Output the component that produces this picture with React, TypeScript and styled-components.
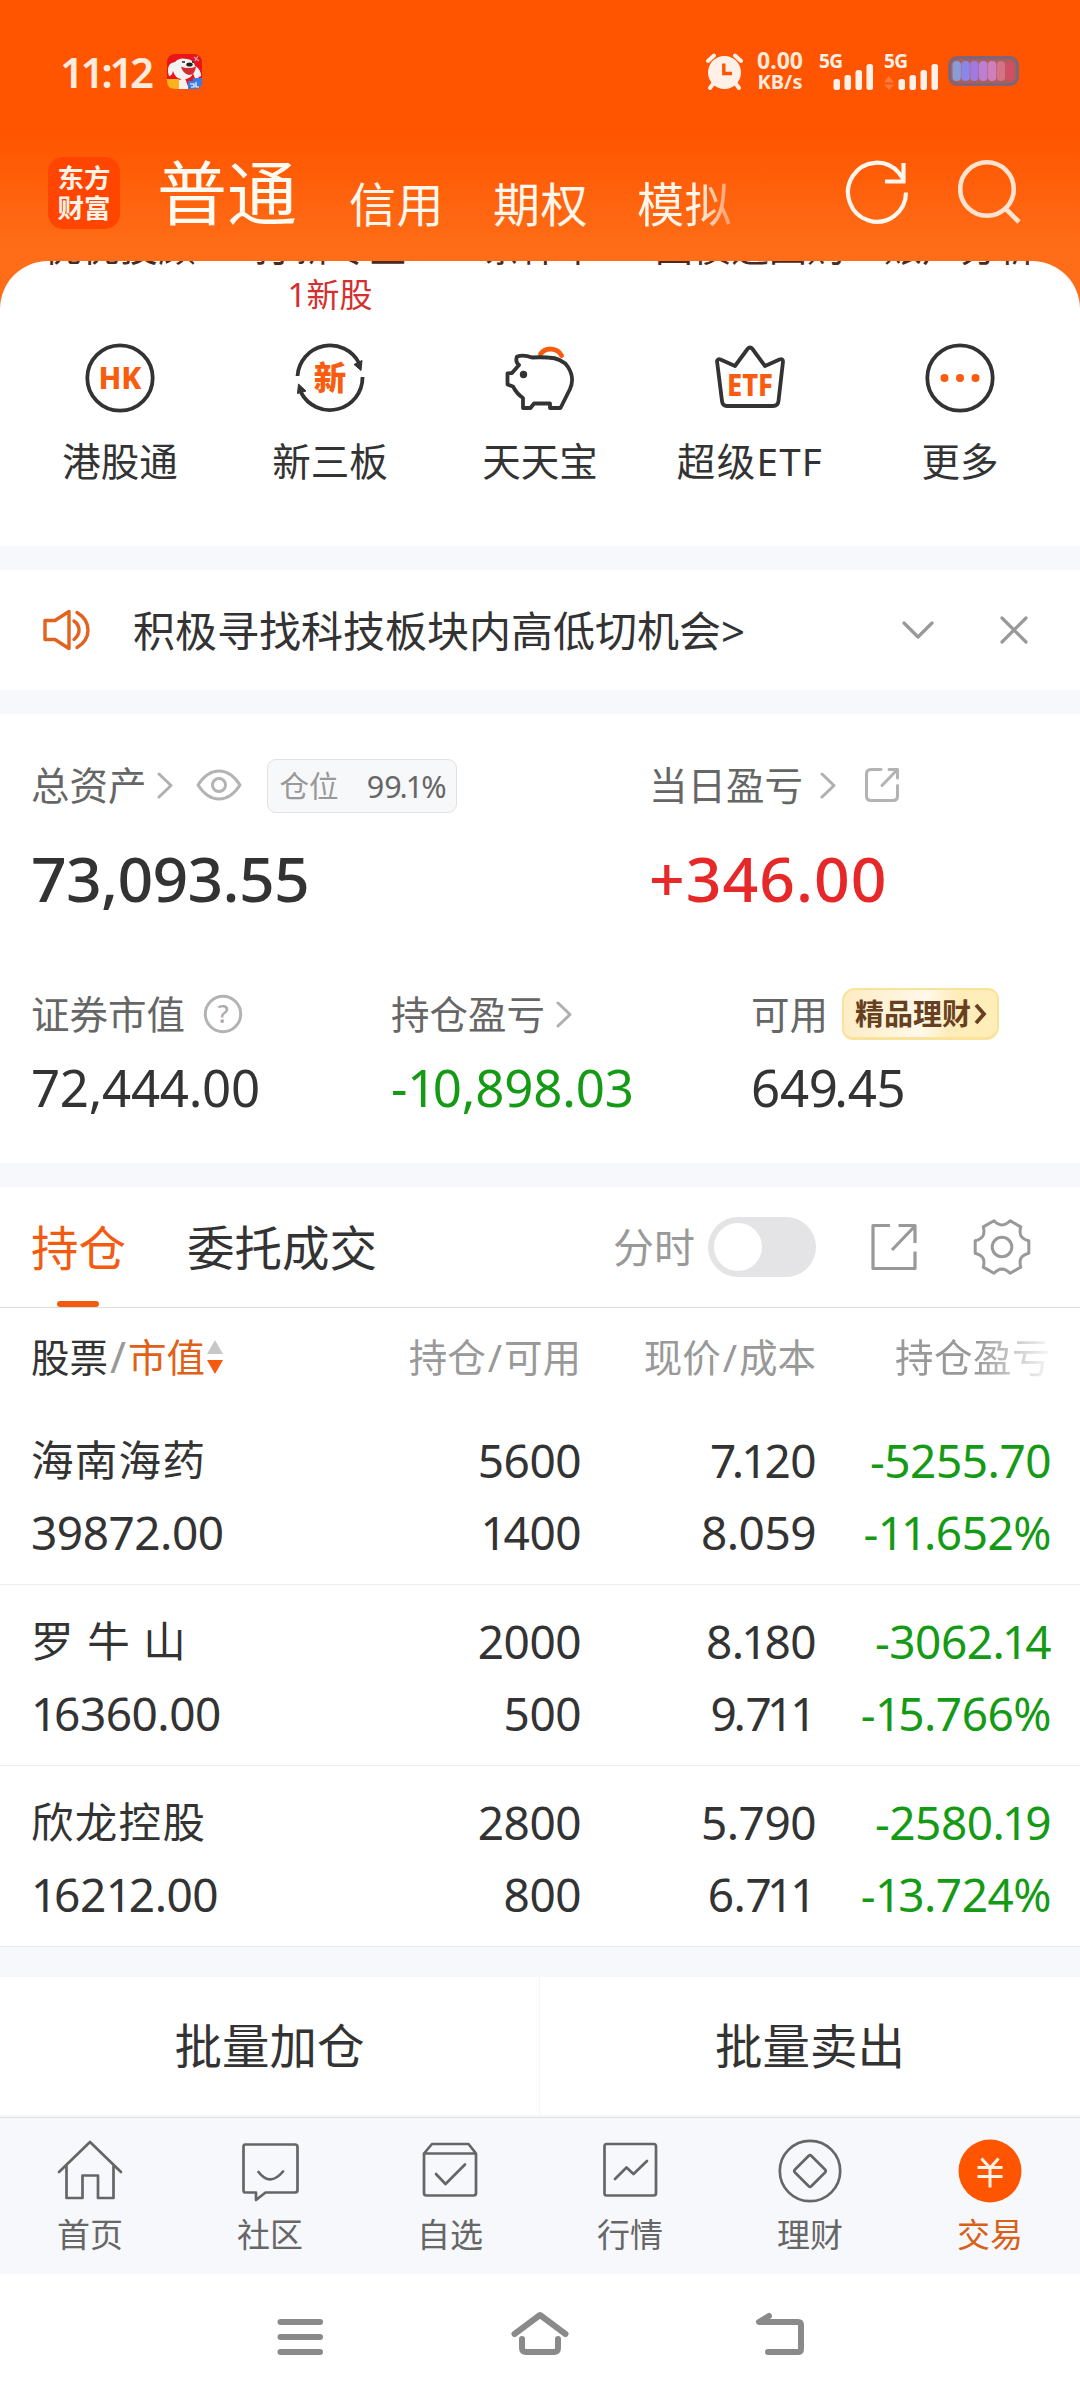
import React from "react";
import styled, { createGlobalStyle } from "styled-components";

const GlobalStyle = createGlobalStyle`
  * { box-sizing: border-box; }
  body {
    margin: 0;
    background: #fff;
    font-family: "Noto Sans", "Noto Sans CJK SC", sans-serif;
    color: #333;
  }
  svg { display: block; flex: none; }
`;

const Screen = styled.div`
  width: 1080px;
  height: 2400px;
  display: flex;
  flex-direction: column;
  overflow: hidden;
  background: #fff;
`;

const Text = styled.span<{ $size: number; $color?: string; $weight?: number; $gap?: number; $line?: number }>`
  font-size: ${(p) => p.$size}px;
  line-height: ${(p) => p.$line ?? Math.round(p.$size * 1.3)}px;
  color: ${(p) => p.$color ?? "#333"};
  font-weight: ${(p) => p.$weight ?? 400};
  letter-spacing: ${(p) => p.$gap ?? 0}px;
  white-space: nowrap;
`;

/* Tightens the pairs that sit loosely when digits share one advance width. */
const Kern = styled.span<{ $em: number }>`
  letter-spacing: ${(p) => p.$em}em;
`;

const pairKern = (a: string, b: string) => {
  if (a === "7" && b === ".") return -0.1;
  if (a === "9" && b === ".") return -0.07;
  if (a === "." && b === "1") return -0.06;
  if (a === "7" && b === "1") return -0.1;
  if (a === "1") return -0.07;
  return 0;
};

const Digits = ({ value }: { value: string }) => (
  <>
    {value.split("").map((c, i) => {
      const k = i < value.length - 1 ? pairKern(c, value[i + 1]) : 0;
      return k ? <Kern key={i} $em={k}>{c}</Kern> : c;
    })}
  </>
);

/* ---------- header ---------- */

const Header = styled.header`
  height: 261px;
  flex: none;
  background: linear-gradient(#ff5500 0, #ff5500 135px, #ff6d18 250px);
`;

const StatusBar = styled.div`
  height: 142px;
  padding: 0 61px 0 60px;
  display: flex;
  align-items: center;
  justify-content: space-between;
`;

const StatusSide = styled.div`
  display: flex;
  align-items: center;
`;

const Clock = styled(Text)`
  width: 107px;
`;

const Speed = styled.div`
  display: flex;
  flex-direction: column;
  align-items: center;
  width: 50px;
  margin: 0 14px 0 12px;
`;

const MainTabs = styled.nav`
  height: 119px;
  padding: 0 58px 0 48px;
  display: flex;
  align-items: flex-start;
`;

const Logo = styled.div`
  width: 72px;
  height: 72px;
  margin-top: 15px;
  border-radius: 15px;
  background: #ff4500;
  display: flex;
  flex-direction: column;
  align-items: center;
  justify-content: center;
`;

const ActiveMode = styled(Text)`
  margin: 6px 0 0 37px;
  width: 153px;
`;

const Mode = styled(Text)<{ $fade?: boolean }>`
  margin-top: 32px;
  width: 144px;
  ${(p) => p.$fade && "-webkit-mask-image: linear-gradient(90deg, #000 60px, rgba(0,0,0,.35) 96px);"}
`;

const HeaderActions = styled.div`
  margin: 17px 0 0 auto;
  display: flex;
  gap: 49px;
`;

/* ---------- shortcuts ---------- */

const ShortcutBackdrop = styled.section`
  height: 285px;
  flex: none;
  background: linear-gradient(#ff6d18 0, #ff6d18 60px, #fff 60px);
`;

const ShortcutCard = styled.div`
  height: 285px;
  border-radius: 48px 48px 0 0;
  background: #fff;
  overflow: hidden;
`;

const ShortcutGrid = styled.div`
  display: grid;
  grid-template-columns: repeat(5, 210px);
  padding: 0 15px;
  justify-items: center;
`;

const ScrolledRow = styled(ShortcutGrid)`
  height: 5px;
  grid-template-rows: 5px;
  overflow: hidden;
  align-items: end;
`;

const BadgeRow = styled(ShortcutGrid)`
  height: 76px;
  align-items: start;
  padding-top: 7px;
`;

const Shortcut = styled.div`
  display: flex;
  flex-direction: column;
  align-items: center;
  gap: 22px;
`;

/* ---------- shared blocks ---------- */

const Divider = styled.div<{ $h: number }>`
  height: ${(p) => p.$h}px;
  flex: none;
  background: #f7f8fb;
`;

const Notice = styled.section`
  height: 120px;
  flex: none;
  display: flex;
  align-items: center;
  padding: 0 51px 0 41px;
`;

const NoticeText = styled(Text)`
  margin-left: 42px;
  flex: 1;
`;

const NoticeActions = styled.div`
  display: flex;
  gap: 65px;
`;

/* ---------- assets ---------- */

const Assets = styled.section`
  height: 449px;
  flex: none;
  padding: 42px 31px 0;
  display: flex;
  flex-direction: column;
  gap: 43px;
`;

const AssetGrid = styled.div<{ $cols: string }>`
  display: grid;
  grid-template-columns: ${(p) => p.$cols};
`;

const Metric = styled.div`
  display: flex;
  flex-direction: column;
`;

const MetricLabel = styled.div`
  height: 58px;
  display: flex;
  align-items: center;
`;

const Spacer = styled.i<{ $w: number }>`
  width: ${(p) => p.$w}px;
  flex: none;
`;

const PositionChip = styled.div`
  width: 190px;
  height: 54px;
  margin-top: 2px;
  border: 1px solid #e2e2e5;
  border-radius: 9px;
  background: #f7f8fa;
  display: flex;
  align-items: center;
  justify-content: space-between;
  padding: 0 9px 0 12px;
`;

const WealthBadge = styled.div`
  width: 157px;
  height: 52px;
  margin-left: 14px;
  border: 2px solid #f9e29a;
  border-bottom-width: 3px;
  border-radius: 13px 11px 13px 11px;
  background: linear-gradient(100deg, #fdecc4 0%, #fff3d8 30%, #fff9ea 52%, #ffecba 70%, #ffeeb8 100%);
  display: flex;
  align-items: center;
  padding-left: 11px;
  gap: 3px;
`;

/* ---------- positions ---------- */

const PositionTabs = styled.div`
  height: 121px;
  flex: none;
  display: flex;
  border-bottom: 1px solid #dcdcdc;
  padding: 0 49px 0 31px;
`;

const Tab = styled.div`
  display: flex;
  flex-direction: column;
  align-items: center;
  justify-content: space-between;
  padding-top: 30px;
`;

const TabMark = styled.i`
  width: 42px;
  height: 6px;
  margin-right: 2px;
  border-radius: 3px;
  background: #f45b10;
`;

const TabTools = styled.div`
  margin-left: auto;
  height: 120px;
  display: flex;
  align-items: center;
`;

const Toggle = styled.div`
  width: 108px;
  height: 60px;
  margin: 0 54px 0 13px;
  border-radius: 30px;
  background: #e4e4e6;
  display: flex;
  align-items: center;
  padding-left: 6px;
`;

const Knob = styled.i`
  width: 48px;
  height: 48px;
  border-radius: 50%;
  background: #fff;
`;

const PositionHead = styled.div`
  height: 98px;
  flex: none;
  display: grid;
  grid-template-columns: 300px 250px 235px 235px;
  padding-left: 31px;
  align-items: center;
`;

const PositionRow = styled.div`
  height: 181px;
  flex: none;
  display: grid;
  grid-template-columns: 300px 250px 235px 235px;
  padding: 20px 0 0 31px;
  align-items: start;
  border-bottom: 1px solid #ececec;
`;

const Rows = styled.div`
  height: 541px;
  flex: none;
  display: flex;
  flex-direction: column;
  justify-content: flex-end;
`;

const Cell = styled.div<{ $right?: boolean }>`
  display: flex;
  flex-direction: column;
  align-items: ${(p) => (p.$right ? "flex-end" : "flex-start")};
`;

const HeadCell = styled.div<{ $right?: boolean; $fade?: boolean }>`
  display: flex;
  align-items: center;
  justify-content: ${(p) => (p.$right ? "flex-end" : "flex-start")};
  ${(p) => p.$fade && "-webkit-mask-image: linear-gradient(90deg, #000 160px, rgba(0,0,0,.08) 234px);"}
`;

const Slash = styled.span`
  margin: 0 2px;
`;

const BatchBar = styled.div`
  height: 138px;
  flex: none;
  display: grid;
  grid-template-columns: 1fr 1fr;
`;

const BatchButton = styled.div<{ $first?: boolean }>`
  display: flex;
  align-items: center;
  justify-content: center;
  border-right: ${(p) => (p.$first ? "1px solid #f4f5f8" : "0")};
`;

/* ---------- bottom bars ---------- */

const BottomNav = styled.nav`
  height: 157px;
  flex: none;
  border-top: 1px solid #e0e1e4;
  background: #f7f8fb;
  display: grid;
  grid-template-columns: repeat(6, 180px);
`;

const NavItem = styled.div`
  display: flex;
  flex-direction: column;
  align-items: center;
  padding-top: 18px;
  gap: 5px;
`;

const SystemNav = styled.div`
  flex: 1;
  display: flex;
  justify-content: center;
  gap: 180px;
  padding-top: 30px;
`;

/* ---------- icons ---------- */

const AppIcon = () => (
  <svg width="35" height="35" viewBox="0 0 35 35">
    <rect width="35" height="35" rx="8" fill="#e8151b" />
    <path d="M1 18 Q0 9 8 8 Q12 3 20 5 Q27 6 28 12 Q34 15 34 22 L29 25 Q27 23 26 19 Q24 26 14 25 Q8 24 6 17 Q5 22 2 22Z" fill="#f4f3f4" />
    <path d="M15 8 h3 M25 8 h2" stroke="#222" strokeWidth="1.500" />
    <ellipse cx="22.500" cy="10.500" rx="3.200" ry="2" fill="#222" />
    <path d="M14 12.500 Q21 15.500 29 12.500 Q28 21 22 21 Q16 20 14 12.500Z" fill="#d52d2f" />
    <path d="M0 25 H12 V35 H8 Q0 35 0 27Z" fill="#fbb21c" />
    <path d="M12 26 L18 24 L22 35 H12Z" fill="#f6f1ee" />
    <path d="M21 27 H26 V24 H35 V28 Q35 35 28 35 H21Z" fill="#3b7be0" />
    <path d="M23 30 h4 v3 h-3 M29 28 v5 h3" stroke="#fff" strokeWidth="1.200" fill="none" />
    <path d="M27 3 l5 4 M31 2 l-3 5" stroke="#c7a0c8" strokeWidth="1.200" />
  </svg>
);

const AlarmIcon = () => (
  <svg width="37" height="37" viewBox="0 0 37 37" fill="none" stroke="#fff1e8">
    <circle cx="18.500" cy="19.500" r="16.500" fill="#fff1e8" stroke="none" />
    <path d="M2 8 L8 2.500 M35 8 L29 2.500" strokeWidth="4" strokeLinecap="round" />
    <path d="M7 31 L4 35 M30 31 L33 35" strokeWidth="4" strokeLinecap="round" />
    <path d="M17.800 10.500 V20.500 H26" stroke="#ff5500" strokeWidth="3.400" />
  </svg>
);

const SignalIcon = ({ arrows }: { arrows?: boolean }) => (
  <svg width="56" height="37" viewBox="0 0 56 37" fill="#fff1e8">
    <text x="0" y="15" fontSize="19" fontWeight="700" fontFamily="Noto Sans" textLength="24">5G</text>
    <rect x="14.500" y="26" width="6.500" height="11" rx="2.500" />
    <rect x="25.500" y="22" width="6.500" height="15" rx="2.500" />
    <rect x="36.500" y="17" width="6.500" height="20" rx="2.500" />
    <rect x="47.500" y="11" width="6.500" height="26" rx="2.500" />
    {arrows && <path d="M0 29.500 L5 23 L10 29.500Z M0 31.500 L5 37 L10 31.500Z" fill="#ff7a3c" />}
  </svg>
);

const cells = ["#8b9bd6", "#8a86ea", "#a279dd", "#bd7fd4", "#d07fbd", "#d47287", "#cf4f64"];

const BatteryIcon = () => (
  <svg width="71" height="30" viewBox="0 0 71 30">
    <rect x="1.500" y="1.500" width="68" height="27" rx="7.500" fill="#a8605a" stroke="#80657a" strokeWidth="3" />
    {cells.map((c, i) => (
      <rect key={c} x={4.500 + i * 8.850} y="5" width="8.400" height="20" rx="4" fill={c} />
    ))}
  </svg>
);

const RefreshIcon = () => (
  <svg width="64" height="66" viewBox="0 0 64 66" fill="none" stroke="#fff7ee" strokeWidth="4.200">
    <path d="M61 33.500 A29 29.500 0 1 1 54 14 L59 21" />
    <path d="M58.500 4 V22.500 H40" />
  </svg>
);

const SearchIcon = () => (
  <svg width="64" height="66" viewBox="0 0 64 66" fill="none" stroke="#ffe3cf" strokeWidth="4.600">
    <circle cx="29" cy="30" r="26.800" />
    <path d="M47 49 L61 63" />
  </svg>
);

const Ring = ({ children }: { children: React.ReactNode }) => (
  <svg width="72" height="72" viewBox="0 0 72 72">
    <circle cx="36" cy="36" r="32.700" fill="none" stroke="#333" strokeWidth="3.800" />
    {children}
  </svg>
);

const HkIcon = () => (
  <Ring>
    <text x="36" y="47" fontSize="31" fontWeight="800" fill="#f95c0e" textAnchor="middle" fontFamily="Noto Sans" textLength="43" lengthAdjust="spacingAndGlyphs">HK</text>
  </Ring>
);

const NewBoardIcon = () => (
  <svg width="72" height="72" viewBox="0 0 72 72">
    <path d="M3.500 34 A32.600 32.600 0 0 1 65 21 M68.500 35 A32.600 32.600 0 0 1 7 50.500" fill="none" stroke="#333" strokeWidth="3.800" />
    <path d="M60 22.500 L68 18.500 L67 28.500Z M4.500 42 L12 49 L3.500 51.500Z" fill="#333" stroke="#333" strokeWidth="1" strokeLinejoin="round" />
    <text x="36" y="48" fontSize="32.500" fontWeight="900" fill="#f95c0e" textAnchor="middle" fontFamily="Noto Sans CJK SC">新</text>
  </svg>
);

const PiggyIcon = () => (
  <svg width="72" height="72" viewBox="0 0 72 72" fill="none" strokeLinejoin="round" strokeLinecap="round">
    <path d="M36.500 12 A12 11 0 0 1 57.500 13.500" stroke="#f95c0e" strokeWidth="4.800" />
    <path d="M13 14.500 Q20 12.500 28 15.500 Q36 15 44 15.500 Q58 16 64 25 Q71 36 66 47 Q63 53 56.500 66 H46 V61.500 H30 L26.500 66 H19 V56 Q13 52 9 44.500 L3.500 42.500 V31.500 L8 31 L15 23 Q11 20 13 14.500Z" stroke="#333" strokeWidth="3.800" />
    <circle cx="19.500" cy="32.500" r="3.700" fill="#333" />
  </svg>
);

const EtfIcon = () => (
  <svg width="72" height="72" viewBox="0 0 72 72" fill="none">
    <path d="M3 19 Q3.500 16.500 6.500 17.500 L21 24 L33.500 7 Q36 4 38.500 7 L51 24 L65.500 17.500 Q69 16.500 69 19.500 L64.500 59 Q64 64 59 64 H13 Q8.500 64 8 59Z" stroke="#333" strokeWidth="3.800" strokeLinejoin="round" />
    <text x="36" y="54" fontSize="31" fontWeight="800" fill="#f95c0e" textAnchor="middle" fontFamily="Noto Sans" textLength="46" lengthAdjust="spacingAndGlyphs">ETF</text>
  </svg>
);

const MoreIcon = () => (
  <Ring>
    {[20.500, 36, 51.500].map((x) => (
      <circle key={x} cx={x} cy="36" r="4" fill="#f95c0e" />
    ))}
  </Ring>
);

const SpeakerIcon = () => (
  <svg width="50" height="44" viewBox="0 0 50 44" fill="none" stroke="#e2621f" strokeWidth="3.400" strokeLinecap="round" strokeLinejoin="round">
    <path d="M4 12.500 H14 L28 3.500 V40.500 L14 31.500 H4Z" />
    <path d="M33 13 Q38 16.500 38 22 Q38 27.500 33 31.500" />
    <path d="M36 4.500 Q47 11 47 22 Q47 33 36 39.500" />
  </svg>
);

const ChevronRight = () => (
  <svg width="16" height="28" viewBox="0 0 16 28" fill="none" stroke="#b0b0b0" strokeWidth="3" strokeLinecap="round" strokeLinejoin="round">
    <path d="M2 3 L14 14.500 L2 26" />
  </svg>
);

const EyeIcon = () => (
  <svg width="46" height="34" viewBox="0 0 46 34" fill="none" stroke="#b3b3b3" strokeWidth="3">
    <path d="M2 17 Q11 3 23 3 Q35 3 44 17 Q35 31 23 31 Q11 31 2 17Z" strokeLinejoin="round" />
    <circle cx="23" cy="17" r="6.500" />
  </svg>
);

const ShareRound = () => (
  <svg width="36" height="36" viewBox="0 0 36 36" fill="none" stroke="#b3b3b3" strokeWidth="3" strokeLinecap="round" strokeLinejoin="round">
    <path d="M17 2.500 H7 Q2.500 2.500 2.500 7 V29 Q2.500 33.500 7 33.500 H29 Q33.500 33.500 33.500 29 V18.500" />
    <path d="M25 2.500 H33.500 V11 M33 3 L18 18.500" />
  </svg>
);

const ShareSquare = () => (
  <svg width="48" height="48" viewBox="0 0 48 48" fill="none" stroke="#999" strokeWidth="3.200" strokeLinejoin="round">
    <path d="M20 2.500 H3 V45.500 H45 V28.500" />
    <path d="M28.500 2.500 H45 V20 M44 4 L22 27" />
  </svg>
);

const QuestionIcon = () => (
  <svg width="40" height="40" viewBox="0 0 40 40">
    <circle cx="20" cy="20" r="17.700" fill="none" stroke="#b3b3b3" strokeWidth="3" />
    <text x="20" y="28.500" fontSize="25" fill="#aaa" textAnchor="middle" fontFamily="Noto Sans" fontWeight="500">?</text>
  </svg>
);

const gearPath = (() => {
  const at = (deg: number, r: number) => {
    const a = (deg * Math.PI) / 180;
    return `${(29 + r * Math.cos(a)).toFixed(2)} ${(29 + r * Math.sin(a)).toFixed(2)}`;
  };
  let d = `M${at(-13, 27.500)}`;
  for (let k = 0; k < 6; k++) {
    const t = k * 60;
    d += ` L${at(t + 13, 27.500)} Q${at(t + 20, 22.500)} ${at(t + 30, 22)} Q${at(t + 40, 22.500)} ${at(t + 47, 27.500)}`;
  }
  return d + "Z";
})();

const GearIcon = () => (
  <svg width="58" height="58" viewBox="0 0 58 58" fill="none" stroke="#999" strokeWidth="3" strokeLinejoin="round">
    <path d={gearPath} />
    <circle cx="29" cy="29" r="9.800" />
  </svg>
);

const SortIcon = () => (
  <svg width="16" height="34" viewBox="0 0 16 34">
    <path d="M8 0 L16 14 H0Z" fill="#c8c8c8" />
    <path d="M0 20 H16 L8 34Z" fill="#f45b10" />
  </svg>
);

const NavSvg = ({ children }: { children: React.ReactNode }) => (
  <svg width="72" height="72" viewBox="0 0 72 72" fill="none" stroke="#666" strokeWidth="2.700" strokeLinecap="round" strokeLinejoin="round">
    {children}
  </svg>
);

const navItems = [
  {
    label: "首页",
    icon: <path d="M5 36 L36 6 L67 36 M12.500 30 V62 H28.500 V39.500 H44 V62 H59.500 V30" />,
  },
  {
    label: "社区",
    icon: <path d="M11 8.500 H61 Q63.500 8.500 63.500 11 V54 Q63.500 56.500 61 56.500 H31.500 L22 64 V56.500 H11 Q9.500 56.500 9.500 54 V11 Q9.500 8.500 11 8.500Z M24.500 36 Q36 51 49 35.500" />,
  },
  {
    label: "自选",
    icon: <path d="M10 17.500 H62 V57 Q62 59.500 59.500 59.500 H12.500 Q10 59.500 10 57 V17.500 L18 8 H54.500 L62 17.500 M22 38 L31.500 48 L51 28.500" />,
  },
  {
    label: "行情",
    icon: <path d="M12.500 8 H59.500 Q62 8 62 10.500 V57 Q62 59.500 59.500 59.500 H12.500 Q10.500 59.500 10.500 57 V10.500 Q10.500 8 12.500 8Z M21 43 L32.500 31.500 L39.500 38 L53 25" />,
  },
  {
    label: "理财",
    icon: (
      <>
        <circle cx="36" cy="35" r="30.200" />
        <path d="M34.500 20 Q36 18.500 37.500 20 L51 33.500 Q52.500 35 51 36.500 L37.500 50 Q36 51.500 34.500 50 L21 36.500 Q19.500 35 21 33.500Z" />
      </>
    ),
  },
  {
    label: "交易",
    active: true,
    icon: (
      <>
        <circle cx="36" cy="35" r="31.500" fill="#ff5500" stroke="none" />
        <path d="M27.500 22.500 L36 32 L44.500 22.500 M23.500 31.500 H48.500 M23.500 40.500 H48.500 M36 32 V51.500" stroke="#fff3ea" strokeWidth="3" strokeLinecap="butt" />
      </>
    ),
  },
];

/* ---------- data ---------- */

const scrolledLabels = ["优优投顾", "打新专区", "条件单", "国债逆回购", "账户分析"];

const shortcuts = [
  { label: "港股通", icon: <HkIcon /> },
  { label: "新三板", icon: <NewBoardIcon /> },
  { label: "天天宝", icon: <PiggyIcon /> },
  { label: "超级ETF", icon: <EtfIcon />, gap: 1.3 },
  { label: "更多", icon: <MoreIcon /> },
];

const positions = [
  { name: "海南海药", value: "39872.00", held: "5600", usable: "1400", price: "7.120", cost: "8.059", pnl: "-5255.70", rate: "-11.652%" },
  { name: "罗 牛 山", value: "16360.00", held: "2000", usable: "500", price: "8.180", cost: "9.711", pnl: "-3062.14", rate: "-15.766%" },
  { name: "欣龙控股", value: "16212.00", held: "2800", usable: "800", price: "5.790", cost: "6.711", pnl: "-2580.19", rate: "-13.724%" },
];

const GREEN = "#159a15";

const Pair = ({ top, bottom, color, right, cjk }: { top: string; bottom: string; color?: string; right?: boolean; cjk?: boolean }) => (
  <Cell $right={right}>
    {cjk ? (
      <Text $size={42.500} $gap={1.300} $line={72}>{top}</Text>
    ) : (
      <Text $size={46} $gap={-0.500} $line={72} $color={color}><Digits value={top} /></Text>
    )}
    <Text $size={46} $gap={-0.500} $line={72} $color={color}><Digits value={bottom} /></Text>
  </Cell>
);

export default function App() {
  return (
    <Screen>
      <GlobalStyle />
      <Header>
        <StatusBar>
          <StatusSide>
            <Clock $size={42} $color="#ffeade" $weight={600} $gap={-3.400}>11:12</Clock>
            <AppIcon />
          </StatusSide>
          <StatusSide>
            <AlarmIcon />
            <Speed>
              <Text $size={23} $line={22} $weight={700} $color="#ffeade">0.00</Text>
              <Text $size={20} $line={22} $weight={700} $color="#ffeade">KB/s</Text>
            </Speed>
            <SignalIcon />
            <Spacer $w={9} />
            <SignalIcon arrows />
            <Spacer $w={8} />
            <BatteryIcon />
          </StatusSide>
        </StatusBar>
        <MainTabs>
          <Logo>
            <Text $size={26.500} $line={30} $weight={700} $color="#fff3e8">东方</Text>
            <Text $size={26.500} $line={30} $weight={700} $color="#fff3e8">财富</Text>
          </Logo>
          <ActiveMode $size={70} $color="#fffaf2">普通</ActiveMode>
          <Spacer $w={39} />
          <Mode $size={47} $color="#fff6ec" $gap={0.500}>信用</Mode>
          <Mode $size={47} $color="#fff6ec" $gap={0.500}>期权</Mode>
          <Mode $size={47} $color="#fff6ec" $gap={0.500} $fade>模拟</Mode>
          <HeaderActions>
            <RefreshIcon />
            <SearchIcon />
          </HeaderActions>
        </MainTabs>
      </Header>

      <ShortcutBackdrop>
        <ShortcutCard>
          <ScrolledRow>
            {scrolledLabels.map((l) => (
              <Text key={l} $size={38} $line={40} $color="#4a2a20">{l}</Text>
            ))}
          </ScrolledRow>
          <BadgeRow>
            <span />
            <Text $size={33} $color="#d3302f">1新股</Text>
          </BadgeRow>
          <ShortcutGrid>
            {shortcuts.map((s) => (
              <Shortcut key={s.label}>
                {s.icon}
                <Text $size={38.500} $gap={s.gap}>{s.label}</Text>
              </Shortcut>
            ))}
          </ShortcutGrid>
        </ShortcutCard>
      </ShortcutBackdrop>

      <Divider $h={24} />
      <Notice>
        <SpeakerIcon />
        <NoticeText $size={42}>积极寻找科技板块内高低切机会&gt;</NoticeText>
        <NoticeActions>
          <svg width="32" height="30" viewBox="0 0 32 30" fill="none" stroke="#999" strokeWidth="3.200" strokeLinecap="round" strokeLinejoin="round">
            <path d="M2 8 L16 22 L30 8" />
          </svg>
          <svg width="30" height="30" viewBox="0 0 30 30" fill="none" stroke="#999" strokeWidth="3.200" strokeLinecap="round">
            <path d="M3 3 L27 27 M27 3 L3 27" />
          </svg>
        </NoticeActions>
      </Notice>
      <Divider $h={24} />

      <Assets>
        <AssetGrid $cols="618px 1fr">
          <Metric>
            <MetricLabel>
              <Text $size={38.500} $color="#666">总资产</Text>
              <Spacer $w={10} />
              <ChevronRight />
              <Spacer $w={23} />
              <EyeIcon />
              <Spacer $w={25} />
              <PositionChip>
                <Text $size={29.500} $color="#999">仓位</Text>
                <Text $size={30.500} $color="#666"><Digits value="99.1%" /></Text>
              </PositionChip>
            </MetricLabel>
            <Text $size={62.500} $line={128} $weight={500} $gap={-0.700}>73,093.55</Text>
          </Metric>
          <Metric>
            <MetricLabel>
              <Text $size={38.500} $color="#666">当日盈亏</Text>
              <Spacer $w={17} />
              <ChevronRight />
              <Spacer $w={28} />
              <ShareRound />
            </MetricLabel>
            <Text $size={62.500} $line={128} $weight={500} $gap={1} $color="#e62828">+346.00</Text>
          </Metric>
        </AssetGrid>
        <AssetGrid $cols="360px 360px 1fr">
          <Metric>
            <MetricLabel>
              <Text $size={38.500} $color="#666">证券市值</Text>
              <Spacer $w={18} />
              <QuestionIcon />
            </MetricLabel>
            <Text $size={51} $line={88} $gap={-0.300}>72,444.00</Text>
          </Metric>
          <Metric>
            <MetricLabel>
              <Text $size={38.500} $color="#666">持仓盈亏</Text>
              <Spacer $w={11} />
              <ChevronRight />
            </MetricLabel>
            <Text $size={51} $line={88} $gap={-0.200} $color={GREEN}><Digits value="-10,898.03" /></Text>
          </Metric>
          <Metric>
            <MetricLabel>
              <Text $size={38.500} $color="#666">可用</Text>
              <WealthBadge>
                <Text $size={29} $weight={700} $color="#66401f">精品理财</Text>
                <svg width="14" height="22" viewBox="0 0 14 22" fill="none" stroke="#66401f" strokeWidth="3.800">
                  <path d="M2 2 L10 11 L2 20" />
                </svg>
              </WealthBadge>
            </MetricLabel>
            <Text $size={51} $line={88} $gap={-0.300}><Digits value="649.45" /></Text>
          </Metric>
        </AssetGrid>
      </Assets>
      <Divider $h={24} />

      <PositionTabs>
        <Tab>
          <Text $size={47.500} $color="#f45b10">持仓</Text>
          <TabMark />
        </Tab>
        <Spacer $w={61} />
        <Tab>
          <Text $size={47.500}>委托成交</Text>
        </Tab>
        <TabTools>
          <Text $size={41} $color="#999">分时</Text>
          <Toggle>
            <Knob />
          </Toggle>
          <ShareSquare />
          <Spacer $w={55} />
          <GearIcon />
        </TabTools>
      </PositionTabs>

      <PositionHead>
        <HeadCell>
          <Text $size={38.500}>股票</Text>
          <Text $size={43} $color="#999"><Slash>/</Slash></Text>
          <Text $size={38.500} $color="#e06018">市值</Text>
          <Spacer $w={2} />
          <SortIcon />
        </HeadCell>
        <HeadCell $right><Text $size={38.500} $color="#999">持仓<Slash>/</Slash>可用</Text></HeadCell>
        <HeadCell $right><Text $size={38.500} $color="#999">现价<Slash>/</Slash>成本</Text></HeadCell>
        <HeadCell $right $fade><Text $size={38.500} $gap={0.500} $color="#999">持仓盈亏</Text></HeadCell>
      </PositionHead>
      <Rows>
        {positions.map((p) => (
          <PositionRow key={p.name}>
            <Pair top={p.name} bottom={p.value} cjk />
            <Pair right top={p.held} bottom={p.usable} />
            <Pair right top={p.price} bottom={p.cost} />
            <Pair right top={p.pnl} bottom={p.rate} color={GREEN} />
          </PositionRow>
        ))}
      </Rows>
      <Divider $h={30} />
      <BatchBar>
        <BatchButton $first><Text $size={47.500}>批量加仓</Text></BatchButton>
        <BatchButton><Text $size={47.500}>批量卖出</Text></BatchButton>
      </BatchBar>
      <Divider $h={2} />

      <BottomNav>
        {navItems.map((n) => (
          <NavItem key={n.label}>
            <NavSvg>{n.icon}</NavSvg>
            <Text $size={33} $color={n.active ? "#d8601a" : "#666"}>{n.label}</Text>
          </NavItem>
        ))}
      </BottomNav>
      <SystemNav>
        <svg width="60" height="60" viewBox="0 0 60 60" stroke="#8a8a8a" strokeWidth="6" strokeLinecap="round">
          <path d="M10.500 18 H50 M10.500 33 H50 M10.500 48 H50" />
        </svg>
        <svg width="60" height="60" viewBox="0 0 60 60" fill="none" stroke="#8a8a8a" strokeWidth="6" strokeLinecap="round" strokeLinejoin="round">
          <path d="M4.500 30 L30 11 L55.500 30 M12 35 V44 Q12 48 16 48 H44 Q48 48 48 44 V35" />
        </svg>
        <svg width="60" height="60" viewBox="0 0 60 60" fill="none" stroke="#8a8a8a" strokeWidth="6" strokeLinecap="round" strokeLinejoin="round">
          <path d="M19 12 L9 18 H48 Q51 18 51 21 V45 Q51 48 48 48 H18" />
        </svg>
      </SystemNav>
    </Screen>
  );
}
